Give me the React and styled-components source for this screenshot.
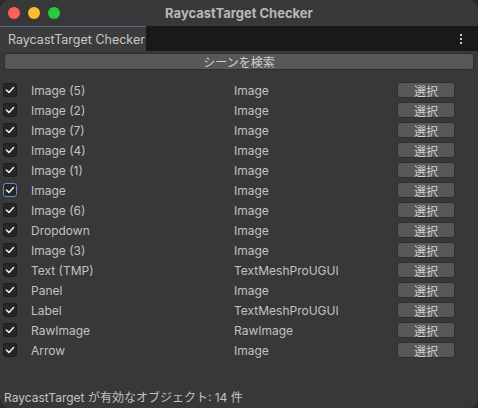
import React from "react";
import styled, { createGlobalStyle } from "styled-components";

const Global = createGlobalStyle`
  html, body { margin: 0; padding: 0; background: #2b2b2b; }
  body { font-family: Inter, "Noto Sans CJK JP", sans-serif; }
`;

const Window = styled.div`
  width: 478px;
  height: 408px;
  background: #383838;
  border-radius: 10px;
  overflow: hidden;
  display: flex;
  flex-direction: column;
  box-sizing: border-box;
`;

const TitleBar = styled.div`
  height: 26px;
  flex: none;
  display: flex;
  align-items: center;
  position: relative;
  background: #383838;
`;

const Lights = styled.div`
  display: flex;
  gap: 8px;
  padding-left: 8px;
`;

const Light = styled.span`
  width: 12px;
  height: 12px;
  border-radius: 50%;
  background: ${(p) => p.$c};
`;

const Title = styled.div`
  position: absolute;
  left: 0;
  right: 0;
  text-align: center;
  font-family: Inter, sans-serif;
  font-weight: 700;
  font-size: 13px;
  color: #b8b8b8;
`;

const TabBar = styled.div`
  height: 25px;
  flex: none;
  background: #191919;
  display: flex;
  align-items: stretch;
  justify-content: space-between;
`;

const Tab = styled.div`
  width: 146px;
  box-sizing: border-box;
  background: #3c3c3c;
  border-top: 1px solid #4b6a8c;
  display: flex;
  align-items: center;
  padding-left: 8px;
  font-size: 12.5px;
  color: #c8c8c8;
`;

const Menu = styled.div`
  width: 20px;
  display: flex;
  flex-direction: column;
  align-items: center;
  justify-content: center;
  gap: 2px;
  margin-right: 7px;
  span {
    width: 2px;
    height: 2px;
    background: #c8c8c8;
  }
`;

const Body = styled.div`
  flex: 1;
  display: flex;
  flex-direction: column;
  padding: 2px 0 0;
`;

const SearchButton = styled.div`
  margin: 0 4px 0 4px;
  height: 17px;
  box-sizing: border-box;
  background: #575757;
  border: 1px solid #2f2f2f;
  border-radius: 3px;
  display: flex;
  align-items: center;
  justify-content: center;
  font-size: 12px;
  color: #cfcfcf;
`;

const List = styled.div`
  margin-top: 10px;
  display: flex;
  flex-direction: column;
`;

const Row = styled.div`
  height: 20px;
  display: grid;
  grid-template-columns: 28px 203px 163px 58px;
  align-items: center;
  padding-left: 3px;
  font-size: 12px;
  color: #c2c2c2;
`;

const Check = styled.div`
  width: 14px;
  height: 14px;
  box-sizing: border-box;
  border-radius: 3px;
  background: #262626;
  border: 1px solid ${(p) => (p.$focus ? "#5f8cc9" : "#1d1d1d")};
  display: flex;
  align-items: center;
  justify-content: center;
`;

const SelectButton = styled.div`
  height: 16px;
  box-sizing: border-box;
  background: #575757;
  border: 1px solid #2f2f2f;
  border-radius: 3px;
  display: flex;
  align-items: center;
  justify-content: center;
  font-size: 12px;
  color: #d0d0d0;
`;

const Footer = styled.div`
  margin-top: auto;
  padding: 0 0 2px 4px;
  font-size: 12px;
  color: #c2c2c2;
  height: 16px;
  line-height: 16px;
`;

const CheckMark = () => (
  <svg width="10" height="10" viewBox="0 0 10 10">
    <path d="M1.5 5.2 L4 7.5 L8.5 2.5" fill="none" stroke="#e8e8e8" strokeWidth="1.6" strokeLinecap="round" strokeLinejoin="round" />
  </svg>
);

const rows = [
  ["Image (5)", "Image"],
  ["Image (2)", "Image"],
  ["Image (7)", "Image"],
  ["Image (4)", "Image"],
  ["Image (1)", "Image"],
  ["Image", "Image", true],
  ["Image (6)", "Image"],
  ["Dropdown", "Image"],
  ["Image (3)", "Image"],
  ["Text (TMP)", "TextMeshProUGUI"],
  ["Panel", "Image"],
  ["Label", "TextMeshProUGUI"],
  ["RawImage", "RawImage"],
  ["Arrow", "Image"],
];

export default function App() {
  return (
    <>
      <Global />
      <Window>
        <TitleBar>
          <Lights>
            <Light $c="#fe5f57" />
            <Light $c="#febc2e" />
            <Light $c="#28c840" />
          </Lights>
          <Title>RaycastTarget Checker</Title>
        </TitleBar>
        <TabBar>
          <Tab>RaycastTarget Checker</Tab>
          <Menu>
            <span />
            <span />
            <span />
          </Menu>
        </TabBar>
        <Body>
          <SearchButton>シーンを検索</SearchButton>
          <List>
            {rows.map(([name, type, focus], i) => (
              <Row key={i}>
                <Check $focus={focus}>
                  <CheckMark />
                </Check>
                <span>{name}</span>
                <span>{type}</span>
                <SelectButton>選択</SelectButton>
              </Row>
            ))}
          </List>
          <Footer>RaycastTarget が有効なオブジェクト: 14 件</Footer>
        </Body>
      </Window>
    </>
  );
}
